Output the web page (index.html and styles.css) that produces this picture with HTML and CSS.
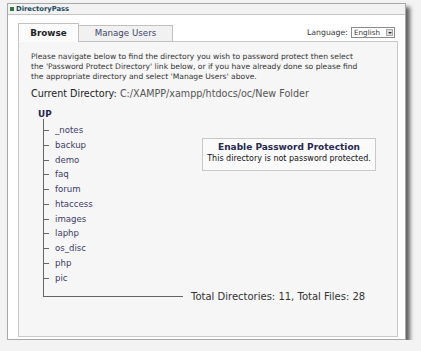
FILE: index.html
```html
<!DOCTYPE html>
<html>
	<head>
		<meta charset="UTF-8">
		<title>DirectoryPass</title>
		<link rel="stylesheet" href="styles.css">
	</head>
	<body>
		<div id="win">
			<div class="titlebar"><i></i>DirectoryPass</div>
			<div class="main">
				<div class="top">
					<ul class="tabs">
						<li class="current">Browse</li>
						<li>Manage Users</li>
					</ul>
					<div class="lang">
						Language:
						<span class="select">English<b></b></span>
					</div>
				</div>
				<div class="panel">
					<p class="intro">
						Please navigate below to find the directory you wish to password protect then select<br>
						the 'Password Protect Directory' link below, or if you have already done so please find<br>
						the appropriate directory and select 'Manage Users' above.
					</p>
					<p class="curr"><span>Current Directory:</span> C:/XAMPP/xampp/htdocs/oc/New Folder</p>
					<div class="up">UP</div>
					<div class="tree">
						<ul class="dirs">
							<li>_notes</li>
							<li>backup</li>
							<li>demo</li>
							<li>faq</li>
							<li>forum</li>
							<li>htaccess</li>
							<li>images</li>
							<li>laphp</li>
							<li>os_disc</li>
							<li>php</li>
							<li>pic</li>
						</ul>
						<div class="side">
							<div class="protect">
								<h3>Enable Password Protection</h3>
								<p>This directory is not password protected.</p>
							</div>
							<div class="total">Total Directories: 11, Total Files: 28</div>
						</div>
					</div>
				</div>
			</div>
		</div>
	</body>
</html>
```
FILE: styles.css
```css
* {
	margin: 0;
	padding: 0;
}

body {
	background: #f3f3f3;
	font-family: "DejaVu Sans", Verdana, sans-serif;
	color: #333;
}

#win {
	width: 397px;
	height: 335px;
	margin: 3px 0 0 7px;
	border: 1px solid #a8a8a8;
	background: #fff;
	box-shadow: 4px 4px 4px rgba(0, 0, 0, .6);
}

.titlebar {
	height: 10px;
	line-height: 10px;
	border-bottom: 1px solid #c4c4c4;
	background: #f2f2f2;
	font-size: 6.8px;
	font-weight: bold;
	color: #1b4a5c;
	padding-left: 2px;
}

.titlebar i {
	display: inline-block;
	width: 4px;
	height: 4px;
	background: #2d7a3e;
	margin-right: 2px;
	vertical-align: 0;
}

.main {
	padding: 8px 7px 0 10px;
}

.top {
	display: flex;
	justify-content: space-between;
	align-items: flex-end;
}

.tabs {
	list-style: none;
	display: flex;
	align-items: flex-end;
	margin-bottom: -1px;
	position: relative;
}

.tabs li {
	height: 15px;
	line-height: 15px;
	width: 93px;
	text-align: center;
	border: 1px solid #c0c0c0;
	background: #f1f1f1;
	font-size: 8.7px;
	color: #40456a;
	margin-left: -1px;
}

.tabs li.current {
	width: 59px;
	height: 17px;
	line-height: 18px;
	margin-left: 0;
	border-bottom-color: #fbfbfb;
	background: #fbfbfb;
	font-weight: bold;
	font-size: 8.8px;
	color: #222;
}

.lang {
	display: flex;
	align-items: center;
	gap: 3px;
	font-size: 7.8px;
	color: #333;
	margin: 0 3px 3px 0;
}

.select {
	display: flex;
	align-items: center;
	justify-content: space-between;
	width: 40px;
	height: 9px;
	border: 1px solid #8a8a8a;
	background: #fff;
	padding-left: 2px;
	font-size: 7.2px;
}

.select b {
	width: 7px;
	height: 7px;
	margin-right: 1px;
	background: #ddd;
	border: 1px solid #aaa;
	box-sizing: border-box;
	position: relative;
}

.select b:after {
	content: "";
	position: absolute;
	left: 1px;
	top: 2px;
	border: 2px solid transparent;
	border-top-color: #333;
	border-bottom: 0;
}

.panel {
	height: 284px;
	border: 1px solid #c8c8c8;
	background: #f6f6f6;
	padding: 10px 12px 0 12px;
}

.intro {
	font-size: 7.6px;
	line-height: 10px;
	color: #333;
}

.curr {
	margin-top: 6px;
	font-size: 9.6px;
	line-height: 11px;
	color: #555;
}

.curr span {
	color: #222;
}

.up {
	margin: 10px 0 0 7px;
	font-size: 8.8px;
	line-height: 10px;
	font-weight: bold;
	color: #22264a;
}

.tree {
	display: flex;
	margin-left: 12px;
}

.dirs {
	list-style: none;
	width: 139px;
	border-left: 1px solid #666;
	border-bottom: 1px solid #666;
	padding: 4px 0 11px;
}

.dirs li {
	position: relative;
	height: 14.75px;
	line-height: 14.75px;
	padding-left: 11px;
	font-size: 8.6px;
	color: #3a3d66;
}

.dirs li:before {
	content: "";
	position: absolute;
	left: 0;
	top: 7px;
	width: 5px;
	border-top: 1px solid #666;
}

.side {
	display: flex;
	flex-direction: column;
	justify-content: space-between;
	align-items: flex-start;
}

.protect {
	margin: 19px 0 0 19px;
	width: 172px;
	height: 31px;
	border: 1px solid #c8c8c8;
	background: #fafafa;
	text-align: center;
}

.protect h3 {
	margin-top: 3px;
	font-size: 9px;
	color: #26294f;
}

.protect p {
	margin-top: 2px;
	font-size: 8px;
	color: #111;
	white-space: nowrap;
}

.total {
	margin: 0 0 -5px 8px;
	font-size: 10px;
	line-height: 10px;
	color: #333;
}
```
